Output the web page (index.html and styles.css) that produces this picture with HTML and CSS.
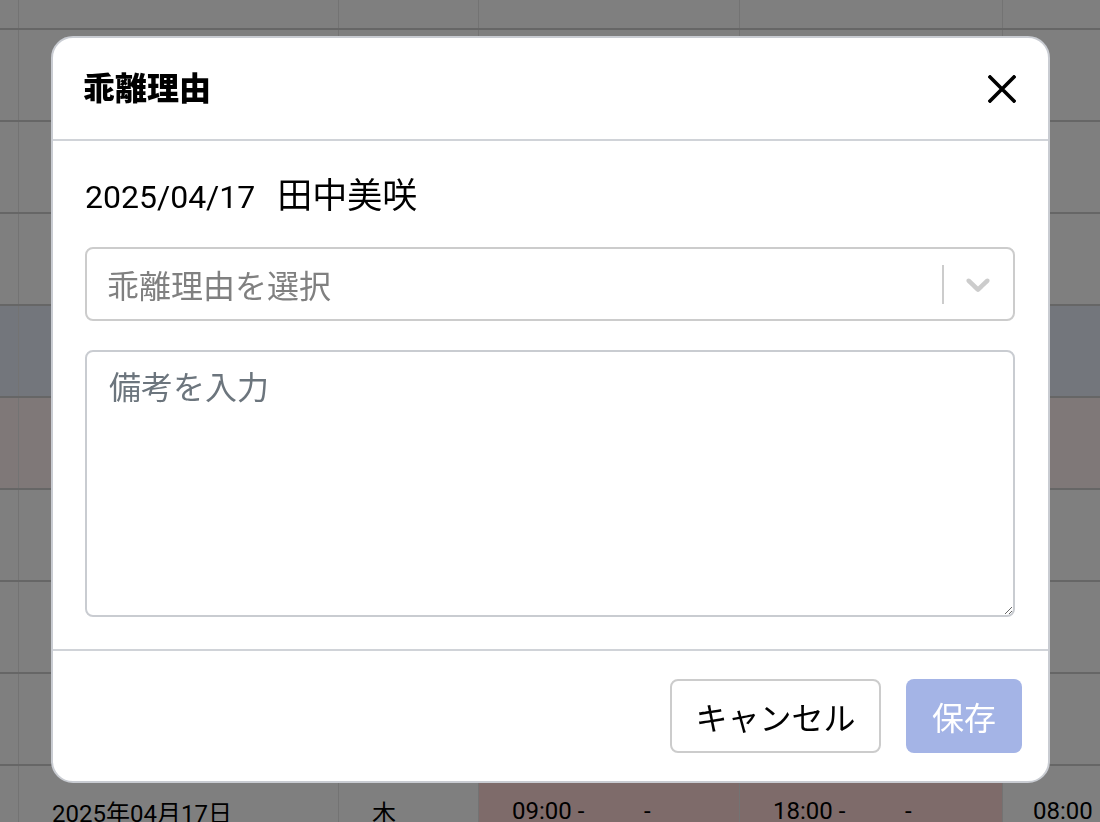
FILE: index.html
```html
<!DOCTYPE html>
<html lang="ja">
<head>
  <meta charset="UTF-8">
  <meta name="viewport" content="width=device-width, initial-scale=1.0">
  <title>乖離理由</title>
  <link rel="stylesheet" href="styles.css">
</head>
<body>

  <!-- Attendance table behind the dialog -->
  <div class="sheet">
    <div class="row row-top">
      <div class="cell"></div><div class="cell"></div><div class="cell"></div><div class="cell"></div><div class="cell"></div><div class="cell"></div>
    </div>
    <div class="row">
      <div class="cell"></div><div class="cell"></div><div class="cell"></div><div class="cell"></div><div class="cell"></div><div class="cell"></div>
    </div>
    <div class="row">
      <div class="cell"></div><div class="cell"></div><div class="cell"></div><div class="cell"></div><div class="cell"></div><div class="cell"></div>
    </div>
    <div class="row">
      <div class="cell"></div><div class="cell"></div><div class="cell"></div><div class="cell"></div><div class="cell"></div><div class="cell"></div>
    </div>
    <div class="row row-selected">
      <div class="cell"></div><div class="cell"></div><div class="cell"></div><div class="cell"></div><div class="cell"></div><div class="cell"></div>
    </div>
    <div class="row row-warn">
      <div class="cell"></div><div class="cell"></div><div class="cell"></div><div class="cell"></div><div class="cell"></div><div class="cell"></div>
    </div>
    <div class="row">
      <div class="cell"></div><div class="cell"></div><div class="cell"></div><div class="cell"></div><div class="cell"></div><div class="cell"></div>
    </div>
    <div class="row">
      <div class="cell"></div><div class="cell"></div><div class="cell"></div><div class="cell"></div><div class="cell"></div><div class="cell"></div>
    </div>
    <div class="row">
      <div class="cell"></div><div class="cell"></div><div class="cell"></div><div class="cell"></div><div class="cell"></div><div class="cell"></div>
    </div>
    <div class="row">
      <div class="cell"></div>
      <div class="cell">2025年04月17日</div>
      <div class="cell">木</div>
      <div class="cell cell-diff"><span class="time">09:00 -</span><span>-</span></div>
      <div class="cell cell-diff"><span class="time">18:00 -</span><span>-</span></div>
      <div class="cell">08:00</div>
    </div>
  </div>

  <!-- Dialog -->
  <div class="overlay">
    <div class="modal">
      <div class="modal-header">
        <h2 class="modal-title">乖離理由</h2>
        <button class="close-btn" type="button" aria-label="閉じる">
          <svg width="28" height="28" viewBox="0 0 28 28">
            <path d="M2 2 L26 26 M26 2 L2 26" stroke="#000" stroke-width="3.6" stroke-linecap="square" fill="none"/>
          </svg>
        </button>
      </div>

      <div class="modal-body">
        <p class="target">
          <span>2025/04/17</span>
          <span class="target-name">田中美咲</span>
        </p>

        <div class="select">
          <div class="select-value">乖離理由を選択</div>
          <span class="select-sep"></span>
          <div class="select-arrow">
            <svg width="40" height="40" viewBox="0 0 20 20">
              <path fill="#cccccc" d="M4.516 7.548c0.436-0.446 1.043-0.481 1.576 0l3.908 3.747 3.908-3.747c0.533-0.481 1.141-0.446 1.574 0 0.436 0.445 0.408 1.197 0 1.615-0.406 0.418-4.695 4.502-4.695 4.502-0.217 0.223-0.502 0.335-0.787 0.335s-0.57-0.112-0.789-0.335c0 0-4.287-4.084-4.695-4.502s-0.436-1.170 0-1.615z"/>
            </svg>
          </div>
        </div>

        <textarea class="memo" placeholder="備考を入力"></textarea>
      </div>

      <div class="modal-footer">
        <button class="btn btn-cancel" type="button">キャンセル</button>
        <button class="btn btn-save" type="button" disabled>保存</button>
      </div>
    </div>
  </div>

</body>
</html>
```

FILE: styles.css
```css
/* Basic Reset */
* {
  margin: 0;
  padding: 0;
  box-sizing: border-box;
}

body {
  font-family: Roboto, "Noto Sans CJK JP", sans-serif;
  background: #fff;
  color: #000;
  height: 100vh;
  overflow: hidden;
}

/* Table behind the dialog */
.sheet {
  display: flex;
  flex-direction: column;
}

.row {
  display: grid;
  grid-template-columns: 19px 320px 140px 261px 263px 1fr;
  height: 92px;
  border-bottom: 2px solid #cccccc;
}

.row-top {
  height: 30px;
}

.row-selected {
  background: #e6edf8;
}

.row-warn {
  background: #fef1f1;
}

.cell {
  border-right: 1px solid #e6e6e6;
  display: flex;
  align-items: center;
  padding-left: 33px;
  font-size: 24px;
}

.cell:first-child {
  padding-left: 0;
}

.cell:last-child {
  border-right: none;
  padding-left: 30px;
}

.cell-diff {
  background: #fdd6d4;
}

.time {
  display: inline-block;
  width: 132px;
}

/* Overlay */
.overlay {
  position: fixed;
  inset: 0;
  background: rgba(0, 0, 0, 0.5);
}

/* Modal */
.modal {
  position: absolute;
  left: 51px;
  top: 36px;
  width: 999px;
  background: #fff;
  border: 2px solid #c9ccd2;
  border-radius: 22px;
  overflow: hidden;
}

.modal-header {
  display: flex;
  align-items: center;
  justify-content: space-between;
  height: 103px;
  padding: 0 33px 0 30px;
  border-bottom: 2px solid #d0d3d8;
}

.modal-title {
  font-size: 32px;
  font-weight: 900;
  line-height: 1;
}

.close-btn {
  background: none;
  border: none;
  cursor: pointer;
  display: flex;
  margin-right: -1px;
}

.modal-body {
  padding: 36px 33px 32px 32px;
  display: flex;
  flex-direction: column;
}

.target {
  display: flex;
  align-items: baseline;
  gap: 22px;
  font-size: 32px;
  line-height: 40px;
  margin-bottom: 30px;
}

.target-name {
  font-size: 35px;
}

/* Select */
.select {
  display: flex;
  align-items: center;
  height: 74px;
  border: 2px solid #cccccc;
  border-radius: 8px;
  margin-bottom: 29px;
}

.select-value {
  flex: 1;
  padding-left: 20px;
  font-size: 32px;
  color: #808080;
}

.select-sep {
  width: 2px;
  height: 39px;
  background: #cccccc;
}

.select-arrow {
  display: flex;
  padding: 0 15px 0 14px;
}

/* Memo */
.memo {
  height: 267px;
  border: 2px solid #c9ccd1;
  border-radius: 8px;
  padding: 16px 22px;
  font-family: Roboto, "Noto Sans CJK JP", sans-serif;
  font-size: 32px;
  line-height: 40px;
  resize: vertical;
  outline: none;
}

.memo::placeholder {
  color: #6c757d;
}

/* Footer */
.modal-footer {
  display: flex;
  justify-content: flex-end;
  gap: 25px;
  padding: 28px 26px 28px 0;
  border-top: 2px solid #d0d3d8;
}

.btn {
  height: 74px;
  font-family: Roboto, "Noto Sans CJK JP", sans-serif;
  font-size: 32px;
  border-radius: 8px;
  cursor: pointer;
}

.btn-cancel {
  width: 211px;
  background: #fff;
  color: #000;
  border: 2px solid #cccccc;
}

.btn-save {
  width: 116px;
  background: #a4b4e6;
  color: #fff;
  border: none;
}
```
